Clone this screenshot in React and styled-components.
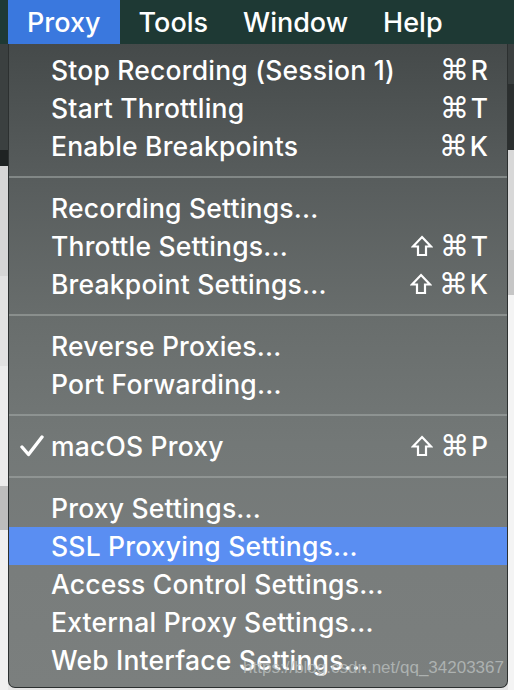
import React from "react";
import styled, { createGlobalStyle } from "styled-components";

const Global = createGlobalStyle`
  html, body { margin: 0; padding: 0; background: #dcdcdc; }
  #root { width: 514px; height: 690px; }
`;

const Screen = styled.div`
  position: relative;
  width: 514px;
  height: 690px;
  overflow: hidden;
  display: flex;
  flex-direction: column;
  font-family: "Inter", "Noto Sans", sans-serif;
`;

const MenuBar = styled.div`
  height: 44px;
  flex: none;
  background: #1e3934;
  display: flex;
  align-items: stretch;
  padding-left: 8px;
`;

const BarItem = styled.div`
  display: flex;
  align-items: center;
  padding: 0 ${(p) => p.$pad}px 0 19px;
  color: #fff;
  font-size: 27px;
  font-weight: 500;
  background: ${(p) => (p.$active ? "#3a78de" : "transparent")};
`;

const Desktop = styled.div`
  flex: 1;
  display: flex;
  justify-content: space-between;
  background: #e6e6e6;
`;

const Edge = styled.div`
  width: ${(p) => p.$w}px;
  display: flex;
  flex-direction: column;
`;

const Band = styled.div`
  height: ${(p) => p.$h}px;
  flex: ${(p) => (p.$grow ? 1 : "none")};
  background: ${(p) => p.$c};
`;

const Panel = styled.div`
  position: absolute;
  left: 8px;
  top: 44px;
  width: 500px;
  height: 644px;
  box-sizing: border-box;
  padding: 7px 0 9px;
  border: 1px solid #2c3030;
  border-top: none;
  border-radius: 0 0 7px 7px;
  background: linear-gradient(
    180deg,
    #454a4a 0%,
    #575c5c 20%,
    #686d6c 42%,
    #737877 62%,
    #797d7c 82%,
    #7b7f7e 100%
  );
  display: flex;
  flex-direction: column;
`;

const Row = styled.div`
  height: 38px;
  flex: none;
  display: flex;
  align-items: center;
  padding: 0 19px 0 0;
  color: #fff;
  font-size: 26.5px;
  font-weight: 500;
  background: ${(p) => (p.$hl ? "#5a8ef2" : "transparent")};
`;

const CheckCol = styled.div`
  width: 42px;
  flex: none;
  display: flex;
  justify-content: flex-start;
  padding-left: 11px;
  box-sizing: border-box;
`;

const Label = styled.span`
  flex: 1;
  white-space: nowrap;
  letter-spacing: 0.2px;
`;

const Shortcut = styled.span`
  display: flex;
  align-items: center;
  gap: 2px;
  white-space: nowrap;
`;

const Cmd = styled.span`
  font-family: "DejaVu Sans", sans-serif;
  font-size: 29px;
  font-weight: 400;
  line-height: 1;
`;

const Sep = styled.div`
  height: 24px;
  flex: none;
  display: flex;
  align-items: center;
  &::after {
    content: "";
    display: block;
    width: 100%;
    height: 2px;
    background: rgba(165, 171, 170, 0.55);
  }
`;

const Watermark = styled.div`
  position: absolute;
  right: 10px;
  bottom: 12px;
  color: rgba(190, 195, 194, 0.75);
  font-family: "Liberation Sans", Arial, sans-serif;
  font-size: 17px;
`;

const Check = () => (
  <svg width="24" height="22" viewBox="0 0 24 22">
    <path d="M2 12 L8.5 19.5 L22 2" fill="none" stroke="#fff" strokeWidth="3.4" strokeLinecap="round" strokeLinejoin="round" />
  </svg>
);

const Shift = () => (
  <svg width="22" height="22" viewBox="0 0 22 22" style={{ marginRight: 5 }}>
    <path d="M11 2 L20 11.5 L15 11.5 L15 20 L7 20 L7 11.5 L2 11.5 Z" fill="none" stroke="#fff" strokeWidth="2.2" strokeLinejoin="miter" />
  </svg>
);

const groups = [
  [
    { label: "Stop Recording (Session 1)", keys: "R" },
    { label: "Start Throttling", keys: "T" },
    { label: "Enable Breakpoints", keys: "K" },
  ],
  [
    { label: "Recording Settings..." },
    { label: "Throttle Settings...", keys: "T", shift: true },
    { label: "Breakpoint Settings...", keys: "K", shift: true },
  ],
  [{ label: "Reverse Proxies..." }, { label: "Port Forwarding..." }],
  [{ label: "macOS Proxy", keys: "P", shift: true, checked: true }],
  [
    { label: "Proxy Settings..." },
    { label: "SSL Proxying Settings...", hl: true },
    { label: "Access Control Settings..." },
    { label: "External Proxy Settings..." },
    { label: "Web Interface Settings..." },
  ],
];

export default function App() {
  return (
    <>
      <Global />
      <Screen>
        <MenuBar>
          <BarItem $active $pad={19}>Proxy</BarItem>
          <BarItem $pad={16}>Tools</BarItem>
          <BarItem $pad={16}>Window</BarItem>
          <BarItem $pad={16}>Help</BarItem>
        </MenuBar>
        <Desktop>
          <Edge $w={8}>
            <Band $h={106} $c="#3b4040" />
            <Band $h={16} $c="#1f2323" />
            <Band $h={110} $c="#d6d6d6" />
            <Band $h={90} $c="#e2e2e2" />
            <Band $h={120} $c="#ececec" />
            <Band $h={44} $c="#bdbdbd" />
            <Band $grow $c="#f0f0f0" />
          </Edge>
          <Edge $w={6}>
            <Band $h={40} $c="#3b4040" />
            <Band $h={66} $c="#2b2f2f" />
            <Band $h={100} $c="#d8d8d8" />
            <Band $h={45} $c="#c6c6c6" />
            <Band $grow $c="#f4f4f4" />
          </Edge>
        </Desktop>
        <Panel>
          {groups.map((g, gi) => (
            <React.Fragment key={gi}>
              {gi > 0 && <Sep />}
              {g.map((it) => (
                <Row key={it.label} $hl={it.hl}>
                  <CheckCol>{it.checked && <Check />}</CheckCol>
                  <Label>{it.label}</Label>
                  {it.keys && (
                    <Shortcut>
                      {it.shift && <Shift />}
                      <Cmd>⌘</Cmd>
                      <span>{it.keys}</span>
                    </Shortcut>
                  )}
                </Row>
              ))}
            </React.Fragment>
          ))}
        </Panel>
        <Watermark>https://blog.csdn.net/qq_34203367</Watermark>
      </Screen>
    </>
  );
}
